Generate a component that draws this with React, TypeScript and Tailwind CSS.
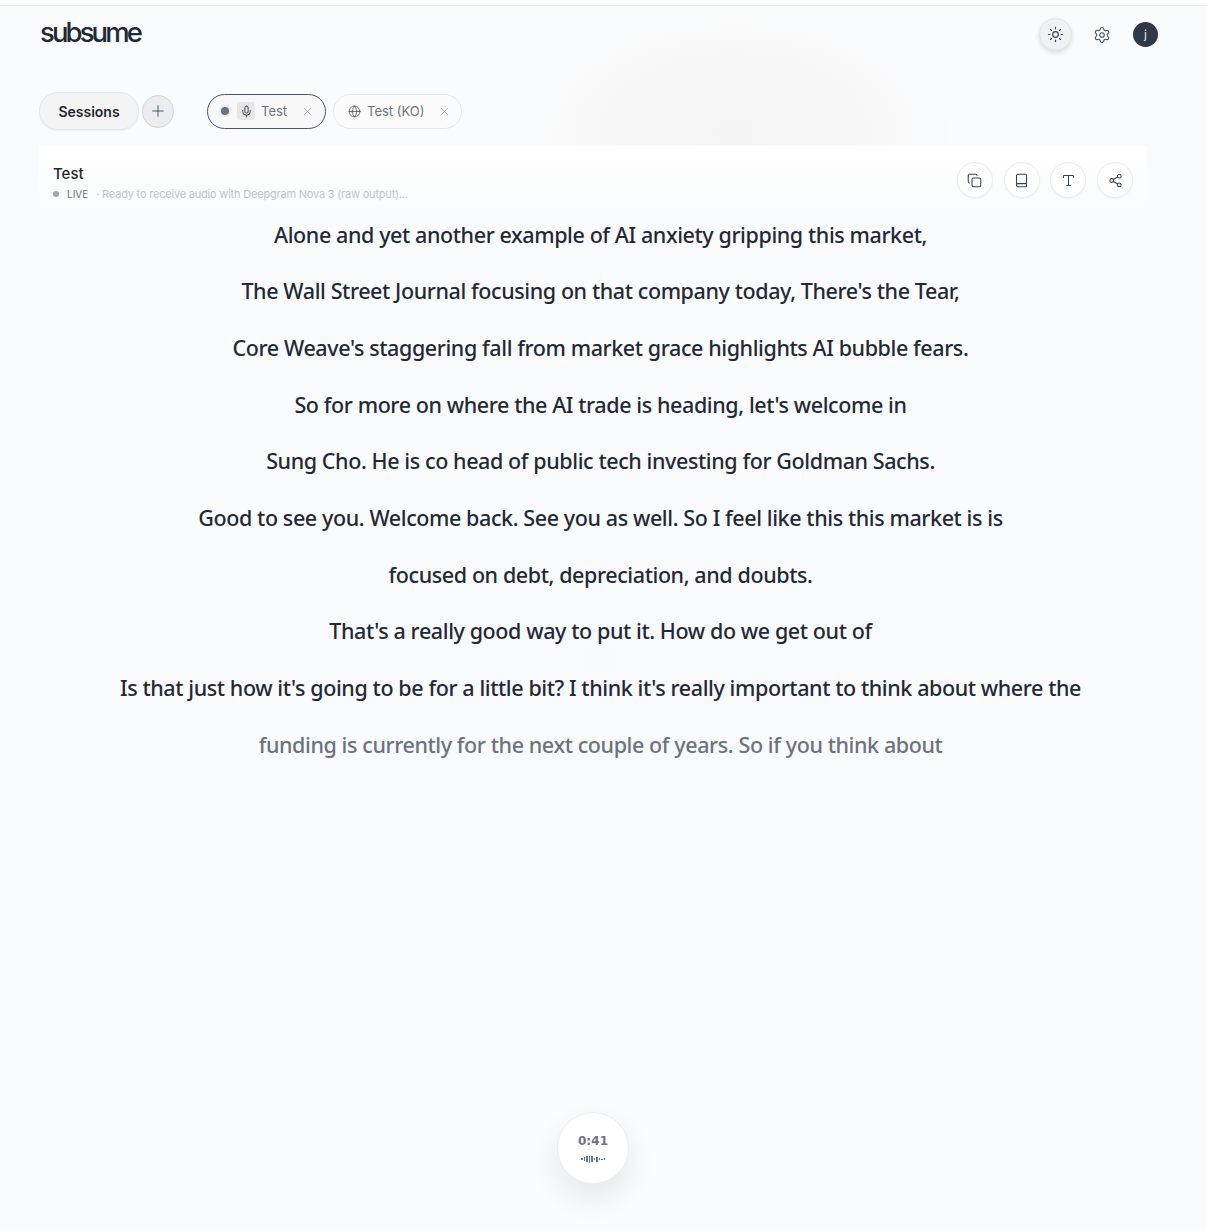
import { Copy, Book, Type, Share2, Sun, Settings, Plus, Mic, Globe, X } from "lucide-react";

const lines = [
  "Alone and yet another example of AI anxiety gripping this market,",
  "The Wall Street Journal focusing on that company today, There's the Tear,",
  "Core Weave's staggering fall from market grace highlights AI bubble fears.",
  "So for more on where the AI trade is heading, let's welcome in",
  "Sung Cho. He is co head of public tech investing for Goldman Sachs.",
  "Good to see you. Welcome back. See you as well. So I feel like this this market is is",
  "focused on debt, depreciation, and doubts.",
  "That's a really good way to put it. How do we get out of",
  "Is that just how it's going to be for a little bit? I think it's really important to think about where the",
];

const bars = [2, 4, 6, 7, 6, 2, 5, 2, 1, 2];

const App = () => {
  return (
    <div className="relative min-h-[1231px] overflow-hidden bg-[#fafbfc] font-['Inter',sans-serif] text-[#1f2433]">
      <div className="pointer-events-none absolute left-[290px] top-[340px] h-[640px] w-[620px] rounded-full bg-[radial-gradient(circle,#f8f9fa_0%,#f9fafb_50%,#fafbfc_70%)]" />
      <div className="pointer-events-none absolute left-[520px] top-[6px] h-[139px] w-[430px] bg-[radial-gradient(ellipse_at_50%_90%,#f4f4f5_0%,#f8f8f9_50%,#fafbfc_75%)]" />

      <div className="relative">
        <div className="h-[6px] border-b border-[#e5e7eb] bg-white" />
        <header className="flex h-[61px] items-start justify-between pl-[40px] pr-[49px]">
          <div className="mt-[8px] text-[27.5px] font-medium leading-[36px] tracking-[-2.9px] text-[#1f2937]">
            subsume
          </div>
          <div className="mt-[12px] flex items-center">
            <button className="flex h-[33px] w-[33px] items-center justify-center rounded-full border border-[#e2e3e6] bg-[#f0f1f2] shadow-[0_2px_5px_rgba(0,0,0,0.12)]">
              <Sun size={17} strokeWidth={1.6} className="text-[#374151]" />
            </button>
            <Settings size={18} strokeWidth={1.5} className="ml-[21px] text-[#4b5563]" />
            <div className="ml-[22px] flex h-[25px] w-[25px] items-center justify-center rounded-full bg-[#2f3748] text-xs text-[#e5e7eb]">
              j
            </div>
          </div>
        </header>

        <div className="mt-[25px] flex h-[38px] items-center pl-[39px]">
          <button className="flex h-[38px] w-[100px] items-center justify-center rounded-full border border-[#e5e6e8] bg-[#f4f4f5] text-[14px] font-semibold shadow-[0_1px_2px_rgba(0,0,0,0.06)]">
            Sessions
          </button>
          <button className="ml-[3px] flex h-[33px] w-[32px] items-center justify-center rounded-full border border-[#d4d5d8] bg-[#ececee]">
            <Plus size={18} strokeWidth={1.3} className="text-[#4b5563]" />
          </button>
          <div className="ml-[33px] flex h-[35px] w-[119px] items-center rounded-full border border-[#4b5563] bg-[#f8f8f9] pl-[13px] text-[13px] text-[#6b7280]">
            <span className="h-[8px] w-[8px] rounded-full bg-[#6b7280] shadow-[0_0_0_2px_#e5e7eb]" />
            <span className="ml-[8px] flex h-[18px] w-[18px] items-center justify-center rounded-[3px] bg-[#e5e6e8]">
              <Mic size={13} strokeWidth={1.8} className="text-[#374151]" />
            </span>
            <span className="ml-[6px] mt-[1px]">Test</span>
            <X size={13} strokeWidth={1.2} className="ml-[14px] text-[#8b909a]" />
          </div>
          <div className="ml-[7px] flex h-[35px] w-[129px] items-center rounded-full border border-[#e5e7eb] bg-[#fbfbfc] pl-[14px] text-[13px] text-[#6b7280]">
            <Globe size={13} strokeWidth={1.5} className="text-[#4b5563]" />
            <span className="ml-[6px] mt-[1px]">Test (KO)</span>
            <X size={13} strokeWidth={1.2} className="ml-[14px] text-[#8b909a]" />
          </div>
        </div>

        <div className="mx-[39px] mt-[16px] flex h-[64px] w-[1108px] items-start justify-between bg-gradient-to-b from-white to-[#fafbfc] px-[14px]">
          <div className="pt-[18px]">
            <div className="text-[15px] font-medium leading-[20px]">Test</div>
            <div className="mt-[3px] flex items-center text-[10px] leading-[14px]">
              <span className="h-[6px] w-[6px] rounded-full bg-[#a3a6ad]" />
              <span className="ml-[8px] text-[#6b7280]">LIVE</span>
              <span className="ml-[8px] text-[11px] tracking-[-0.2px] text-[#c0c3c9]">· Ready to receive audio with Deepgram Nova 3 (raw output)...</span>
            </div>
          </div>
          <div className="mt-[16px] flex items-center gap-[10.7px]">
            {[Copy, Book, Type, Share2].map((Icon, i) => (
              <button key={i} className="flex h-[36px] w-[36px] items-center justify-center rounded-full border border-[#eaebed] bg-white shadow-[0_1px_2px_rgba(0,0,0,0.04)]">
                <Icon size={15} strokeWidth={1.7} className="text-[#374151]" />
              </button>
            ))}
          </div>
        </div>

        <main className="mt-[9.75px] flex flex-col items-center pr-[6px] font-['Noto_Sans',sans-serif] text-[21.5px] font-medium leading-[30px] tracking-[-0.4px]">
          {lines.map((line) => (
            <p key={line} className="mb-[26.67px] text-center text-[#1f2937]">{line}</p>
          ))}
          <p className="text-center text-[#6b7280]">funding is currently for the next couple of years. So if you think about</p>
        </main>
      </div>

      <div className="absolute left-[557px] top-[1112px] flex h-[72px] w-[72px] flex-col items-center justify-center rounded-full border border-[#eceef0] bg-white shadow-[0_14px_30px_rgba(0,0,0,0.08)]">
        <span className="font-['DejaVu_Sans',sans-serif] text-[12px] font-bold leading-[16px] tracking-[0.1px] text-[#6b7280]">0:41</span>
        <div className="mt-[6px] flex h-[8px] items-center gap-[1px]">
          {bars.map((h, i) => (
            <span key={i} className="w-[1.5px] bg-[#6b7280]" style={{ height: h }} />
          ))}
        </div>
      </div>
    </div>
  );
};

export default App;
